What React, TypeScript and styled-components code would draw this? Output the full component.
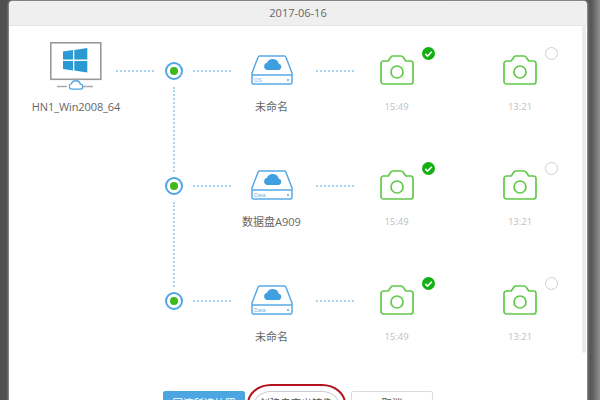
import styled, { createGlobalStyle } from 'styled-components'

const GlobalStyle = createGlobalStyle`
  html, body {
    margin: 0;
    padding: 0;
    width: 600px;
    height: 400px;
    overflow: hidden;
  }
`

const Backdrop = styled.div`
  display: flex;
  width: 600px;
  height: 400px;
  overflow: hidden;
  padding: 1px 0 0 9px;
  box-sizing: border-box;
  background: linear-gradient(90deg, #505050 0, #555 589px, #5c5c5c 592px, #8f8f8f 600px);
  font-family: 'Open Sans', 'Noto Sans CJK SC', sans-serif;
`

const Dialog = styled.div`
  position: relative;
  display: flex;
  flex-direction: column;
  width: 578px;
  height: 420px;
  background: #fff;
  border-radius: 4px 4px 0 0;
  box-shadow: 0 0 2px 1px rgba(255, 255, 255, 0.4);
`

const Header = styled.div`
  flex: none;
  height: 24px;
  line-height: 24px;
  text-align: center;
  font-size: 11px;
  color: #666;
  background: #efefef;
  border-bottom: 1px solid #e6e6e6;
  border-radius: 4px 4px 0 0;
`

const Body = styled.div`
  display: flex;
  padding: 16px 0 0;
`

const HostColumn = styled.div`
  flex: none;
  width: 155px;
  display: flex;
  align-items: flex-start;
  padding-left: 23px;
  box-sizing: border-box;
`

const HostNode = styled.div`
  flex: none;
  width: 88px;
  margin-right: -4px;
  display: flex;
  flex-direction: column;
  align-items: center;
`

const HostLabel = styled.div`
  margin-top: 10px;
  font-size: 11px;
  line-height: 14px;
  letter-spacing: -0.1px;
  color: #666;
  white-space: nowrap;
`

const Link = styled.div<{ $gap: number }>`
  flex: none;
  width: 38px;
  height: 0;
  margin: 28px 0 0 ${(p) => p.$gap}px;
  border-top: 2px dotted #a9d6f3;
`

const Rows = styled.div`
  flex: 1;
  display: flex;
  flex-direction: column;
`

const Row = styled.div`
  display: flex;
  height: 115px;
`

const Spine = styled.div`
  flex: none;
  width: 20px;
  display: flex;
  flex-direction: column;
  align-items: center;
  padding-top: 20px;
`

const Radio = styled.div`
  flex: none;
  width: 18px;
  height: 18px;
  box-sizing: border-box;
  border: 2px solid #4fa6e3;
  border-radius: 50%;
  display: flex;
  align-items: center;
  justify-content: center;

  &::after {
    content: '';
    width: 8px;
    height: 8px;
    border-radius: 50%;
    background: #3fb81f;
  }
`

const SpineLine = styled.div`
  flex: none;
  width: 0;
  height: 85px;
  margin-top: 7px;
  border-left: 2px dotted #a9d6f3;
`

const Node = styled.div<{ $width: number }>`
  flex: none;
  width: ${(p) => p.$width}px;
  display: flex;
  flex-direction: column;
  align-items: center;
  padding-top: 13px;
`

const NodeLabel = styled.div`
  margin-top: 15px;
  font-size: 11px;
  line-height: 14px;
  color: #666;
  white-space: nowrap;
`

const Time = styled.div`
  margin-top: 15px;
  font-size: 9.5px;
  line-height: 14px;
  color: #c0c0c0;
`

const Shot = styled.div`
  position: relative;
  width: 34px;
  height: 30px;
`

const Check = styled.span`
  position: absolute;
  left: 42px;
  top: -8px;
  width: 13px;
  height: 13px;
  border-radius: 50%;
  background: #12b012;
  display: flex;
`

const EmptyCheck = styled.span`
  position: absolute;
  left: 42px;
  top: -8px;
  width: 13px;
  height: 13px;
  box-sizing: border-box;
  border-radius: 50%;
  border: 1px solid #cfcfcf;
  background: #fff;
`

const Footer = styled.div`
  position: absolute;
  left: 154px;
  top: 390px;
  display: flex;
  gap: 8px;
`

const Button = styled.div<{ $kind: 'primary' | 'plain'; $width: number }>`
  width: ${(p) => p.$width}px;
  height: 28px;
  box-sizing: border-box;
  border-radius: 2px;
  text-align: center;
  font-size: 10.5px;
  line-height: 22px;
  white-space: nowrap;
  color: ${(p) => (p.$kind === 'primary' ? '#fff' : '#555')};
  background: ${(p) => (p.$kind === 'primary' ? '#4ba6e2' : '#fff')};
  border: 1px solid ${(p) => (p.$kind === 'primary' ? '#4ba6e2' : '#dcdcdc')};
`

const CancelButton = styled(Button)`
  margin-left: 4px;
`

const Marker = styled.div`
  position: absolute;
  left: 238px;
  top: 383px;
  width: 99px;
  height: 44px;
  box-sizing: border-box;
  border: 2px solid #b5141e;
  border-radius: 24px / 20px;
  box-shadow: inset 0 0 0 5px #fff, inset 0 0 0 6px #ccc;
`

const Scrollbar = styled.div`
  position: absolute;
  right: 1px;
  top: 25px;
  width: 4px;
  height: 327px;
  border-radius: 2px;
  background: #ebebeb;
`

const MonitorIcon = () => (
  <svg width="54" height="48" viewBox="0 0 54 48" fill="none">
    <rect x="1.800" y="0.800" width="50" height="36.500" stroke="#999" strokeWidth="1.600" fill="#fff" />
    <path d="M14 9.500l10-1.400v9.400h-10zM25.300 7.900l13-1.900v11.500h-13zM14 19h10v9.400l-10-1.400zM25.300 19h13v11.500l-13-1.900z" fill="#2b9ad2" />
    <path d="M8 44.500h10M34 44.500h10" stroke="#aaa" strokeWidth="1.600" />
    <path d="M22.500 47.200h8.500a2.500 2.500 0 0 0 .4-5 4.800 4.800 0 0 0-9-.6 2.900 2.900 0 0 0 .1 5.600z" stroke="#4fa6e3" strokeWidth="1.300" fill="#fff" />
    <path d="M26.500 37v2" stroke="#aaa" strokeWidth="1.200" />
  </svg>
)

const DiskIcon = ({ tag }: { tag: string }) => (
  <svg width="42" height="30" viewBox="0 0 42 30" fill="none">
    <path d="M8.500 1h25a1.500 1.500 0 0 1 1.400 1L41 18v9.500a1.500 1.500 0 0 1-1.500 1.500h-37A1.500 1.500 0 0 1 1 27.500V18L7.100 2a1.500 1.500 0 0 1 1.400-1z" stroke="#58a9e6" strokeWidth="1.500" fill="#fff" />
    <path d="M1 20h40" stroke="#58a9e6" strokeWidth="1.500" />
    <path d="M16 15h11a3.200 3.200 0 0 0 .8-6.300 6.300 6.300 0 0 0-11.800-.9A3.700 3.700 0 0 0 16 15z" fill="#3f9fe0" />
    <circle cx="37" cy="25" r="1" fill="#58a9e6" />
    <text x="3" y="27" fontSize="5.500" fontFamily="'Liberation Sans', sans-serif" fill="#74b6e8">{tag}</text>
  </svg>
)

const CameraIcon = () => (
  <svg width="34" height="30" viewBox="0 0 34 30" fill="none">
    <path d="M3.500 6h4.700l2.800-4a2.300 2.300 0 0 1 1.800-1h8.400a2.300 2.300 0 0 1 1.800 1l2.800 4h4.700a2.500 2.500 0 0 1 2.500 2.500v18a2.500 2.500 0 0 1-2.500 2.500h-27a2.500 2.500 0 0 1-2.500-2.500v-18a2.500 2.500 0 0 1 2.500-2.500z" stroke="#62c94a" strokeWidth="1.700" strokeLinejoin="round" />
    <circle cx="17" cy="17" r="6" stroke="#62c94a" strokeWidth="1.700" />
  </svg>
)

const CheckMark = () => (
  <svg width="13" height="13" viewBox="0 0 13 13" fill="none">
    <path d="M3.300 6.800l2.300 2.200 4.200-4.300" stroke="#fff" strokeWidth="1.600" />
  </svg>
)

const rows = [
  { tag: 'OS', name: '未命名' },
  { tag: 'Data', name: '数据盘A909' },
  { tag: 'Data', name: '未命名' },
]

const App = () => {
  return (
    <Backdrop>
      <GlobalStyle />
      <Dialog>
        <Header>2017-06-16</Header>
        <Body>
          <HostColumn>
            <HostNode>
              <MonitorIcon />
              <HostLabel>HN1_Win2008_64</HostLabel>
            </HostNode>
            <Link $gap={0} />
          </HostColumn>
          <Rows>
            {rows.map((row, i) => (
              <Row key={i}>
                <Spine>
                  <Radio />
                  {i < rows.length - 1 && <SpineLine />}
                </Spine>
                <Link $gap={9} />
                <Node $width={81}>
                  <DiskIcon tag={row.tag} />
                  <NodeLabel>{row.name}</NodeLabel>
                </Node>
                <Link $gap={4} />
                <Node $width={85}>
                  <Shot>
                    <CameraIcon />
                    <Check>
                      <CheckMark />
                    </Check>
                  </Shot>
                  <Time>15:49</Time>
                </Node>
                <Node $width={162}>
                  <Shot>
                    <CameraIcon />
                    <EmptyCheck />
                  </Shot>
                  <Time>13:21</Time>
                </Node>
              </Row>
            ))}
          </Rows>
        </Body>
        <Scrollbar />
        <Footer>
          <Button $kind="primary" $width={82}>回滚所选快照</Button>
          <Button $kind="plain" $width={86}>创建自定义镜像</Button>
          <CancelButton $kind="plain" $width={82}>取消</CancelButton>
        </Footer>
        <Marker />
      </Dialog>
    </Backdrop>
  )
}

export default App
